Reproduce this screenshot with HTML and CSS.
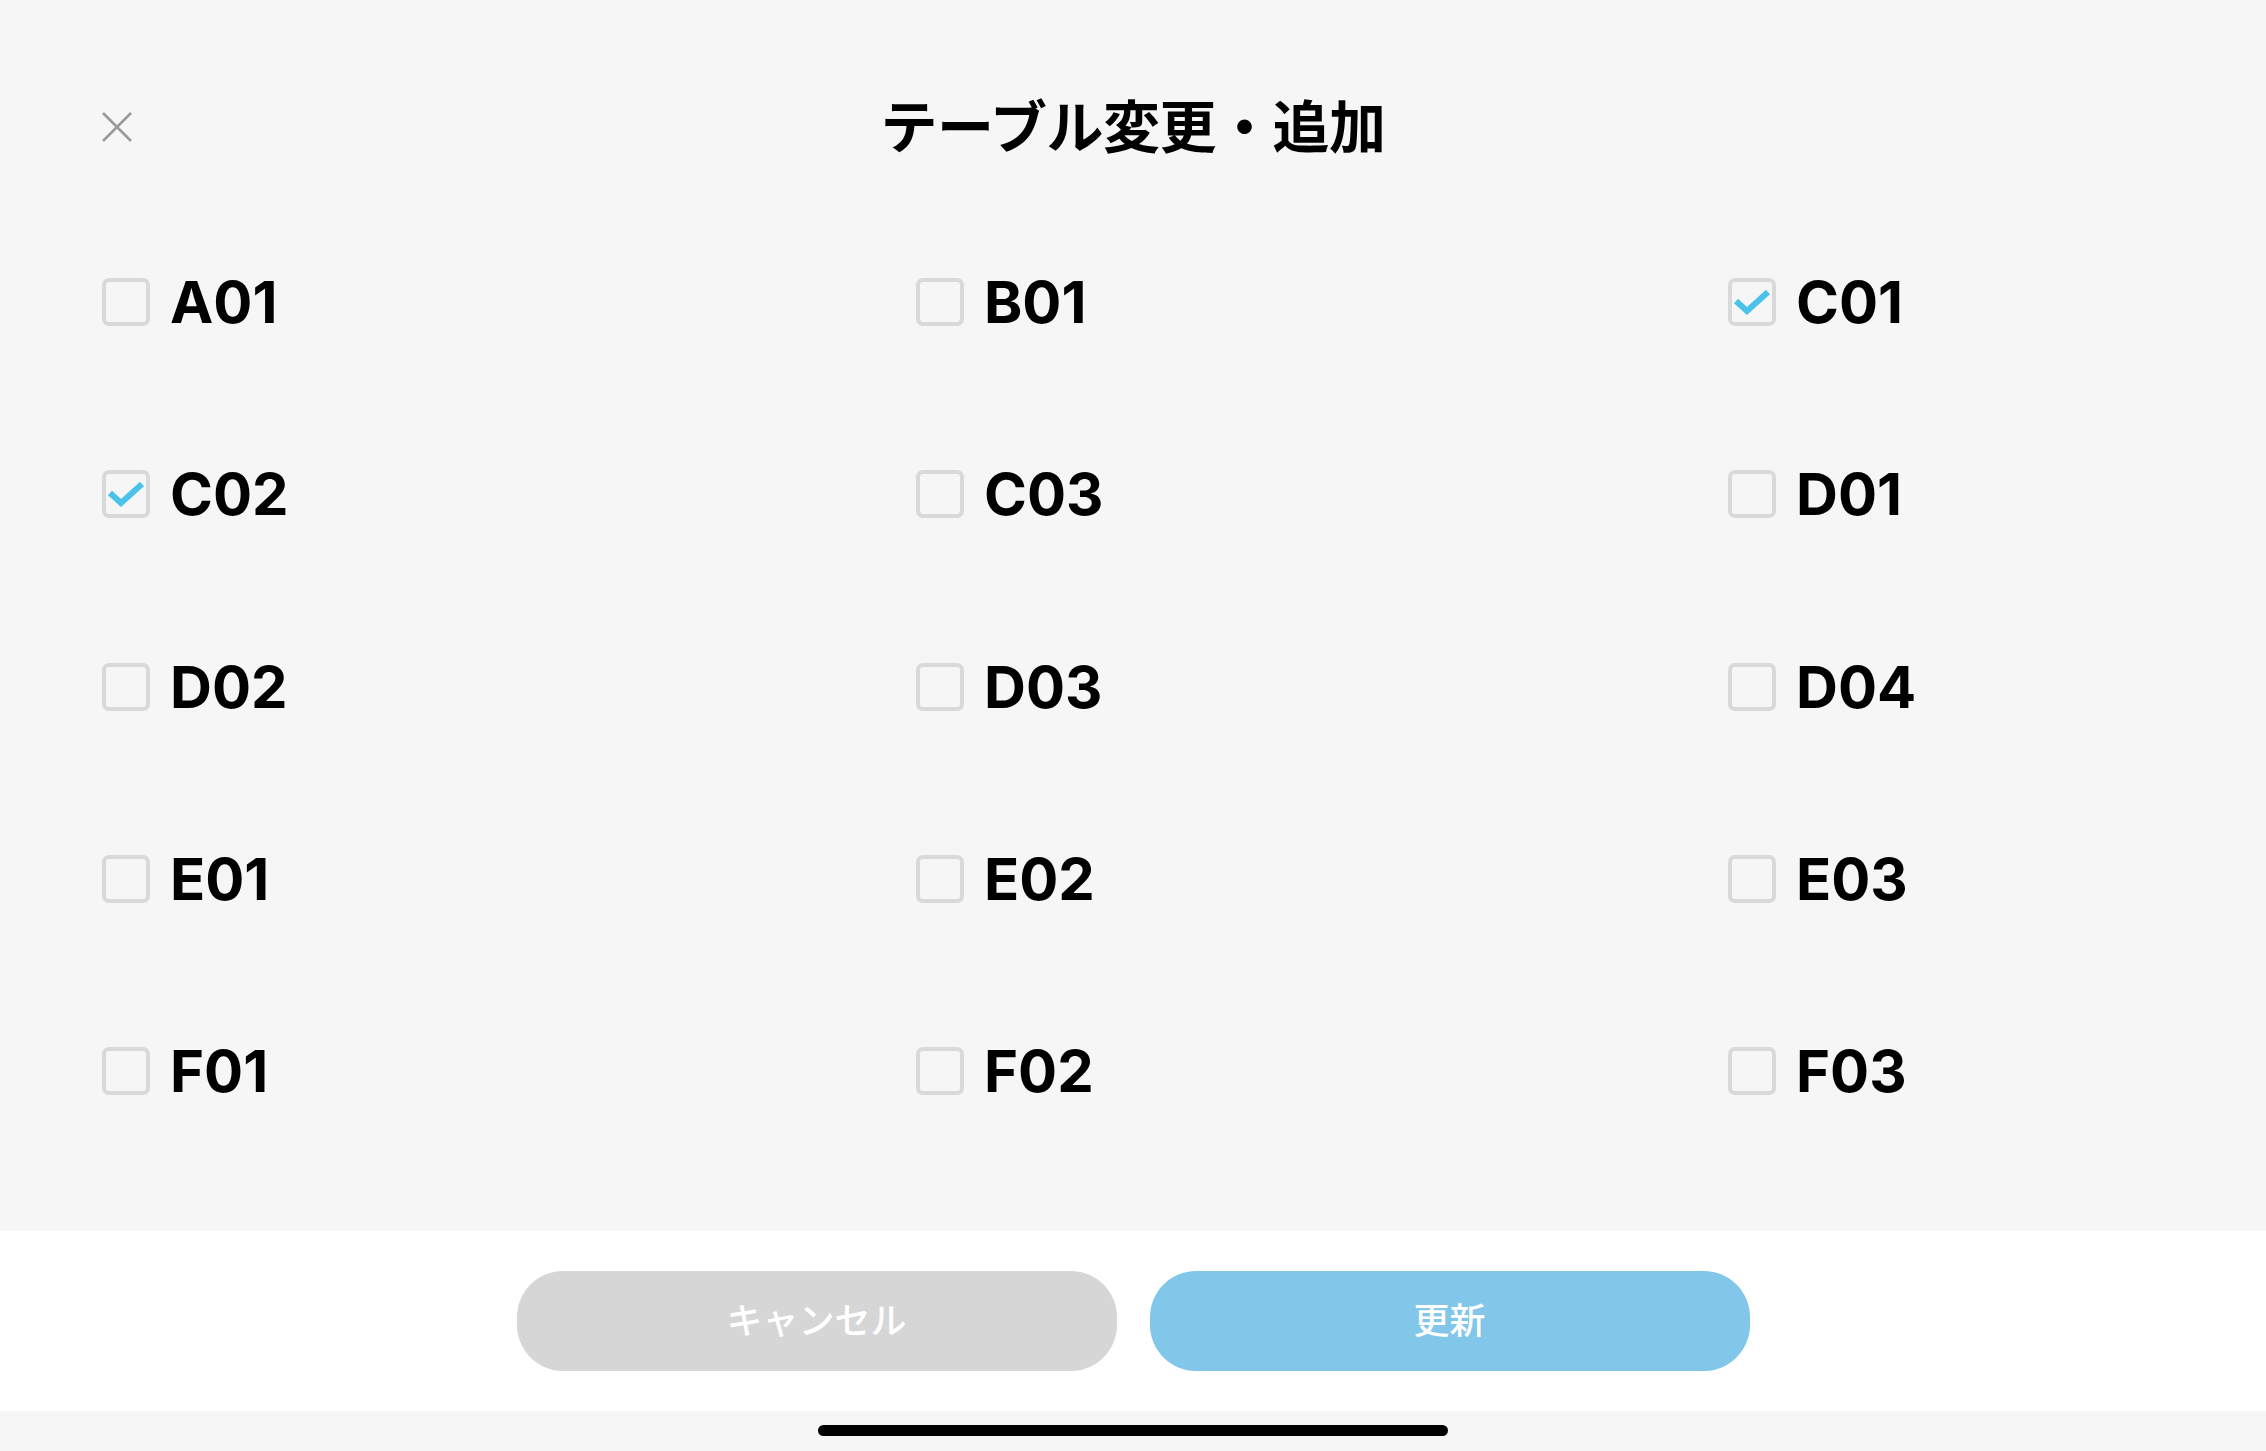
FILE: index.html
```html
<!DOCTYPE html>
<html lang="ja">
<head>
<meta charset="utf-8">
<link rel="stylesheet" href="styles.css">
</head>
<body>
<div class="screen">
  <header class="header">
    <div class="close">
      <svg width="30" height="30" viewBox="0 0 30 30"><path d="M1 1 L29 29 M29 1 L1 29" stroke="#9a9a9a" stroke-width="2.6" fill="none"/></svg>
    </div>
    <h1 class="title">テーブル変更・追加</h1>
    <div></div>
  </header>
  <main class="tables">
    <label class="item"><span class="box"></span><span class="name">A01</span></label>
    <label class="item"><span class="box"></span><span class="name">B01</span></label>
    <label class="item"><span class="box checked"><svg viewBox="0 0 48 48"><polyline points="8,23 19,33 40,14"/></svg></span><span class="name">C01</span></label>
    <label class="item"><span class="box checked"><svg viewBox="0 0 48 48"><polyline points="8,23 19,33 40,14"/></svg></span><span class="name">C02</span></label>
    <label class="item"><span class="box"></span><span class="name">C03</span></label>
    <label class="item"><span class="box"></span><span class="name">D01</span></label>
    <label class="item"><span class="box"></span><span class="name">D02</span></label>
    <label class="item"><span class="box"></span><span class="name">D03</span></label>
    <label class="item"><span class="box"></span><span class="name">D04</span></label>
    <label class="item"><span class="box"></span><span class="name">E01</span></label>
    <label class="item"><span class="box"></span><span class="name">E02</span></label>
    <label class="item"><span class="box"></span><span class="name">E03</span></label>
    <label class="item"><span class="box"></span><span class="name">F01</span></label>
    <label class="item"><span class="box"></span><span class="name">F02</span></label>
    <label class="item"><span class="box"></span><span class="name">F03</span></label>
  </main>
  <div class="spacer"></div>
  <footer class="footer">
    <button class="btn cancel">キャンセル</button>
    <button class="btn update">更新</button>
  </footer>
  <div class="home"><span class="home-bar"></span></div>
</div>
</body>
</html>
```
FILE: styles.css
```css
* { box-sizing: border-box; }
html, body { margin: 0; padding: 0; }
body {
  background: #f6f6f6;
  font-family: "Inter", "Noto Sans CJK JP", sans-serif;
  color: #000;
  overflow: hidden;
}
.screen {
  width: 2266px;
  height: 1451px;
  display: flex;
  flex-direction: column;
}
.header {
  display: grid;
  grid-template-columns: 1fr auto 1fr;
  align-items: center;
  height: 80px;
  margin-top: 87px;
}
.close {
  padding-left: 102px;
  display: flex;
  align-items: center;
}
.close svg { display: block; }
.title {
  margin: 0;
  margin-top: -8px;
  font-family: "Noto Sans CJK JP", sans-serif;
  font-weight: 700;
  font-size: 57px;
  line-height: 80px;
  letter-spacing: -0.5px;
}
.tables {
  margin-top: 39px;
  padding-left: 102px;
  display: grid;
  grid-template-columns: 814px 812px 1fr;
  grid-auto-rows: 192.25px;
}
.item {
  display: flex;
  align-items: center;
  gap: 20px;
  height: 192px;
}
.box {
  width: 48px;
  height: 48px;
  border: 4px solid #d9d9d9;
  border-radius: 7px;
  position: relative;
  flex: none;
}
.box svg {
  position: absolute;
  left: -4px;
  top: -4px;
  width: 48px;
  height: 48px;
}
.box polyline {
  fill: none;
  stroke: #4bc2ea;
  stroke-width: 6;
  stroke-linejoin: miter;
}
.name {
  font-family: "Inter", sans-serif;
  font-weight: 700;
  font-size: 58px;
  line-height: 1;
}
.spacer { flex: 1; }
.footer {
  background: #fff;
  height: 180px;
  display: flex;
  justify-content: center;
  align-items: center;
  gap: 33px;
}
.btn {
  width: 600px;
  height: 100px;
  border: none;
  border-radius: 46px;
  color: #fff;
  font-family: "Noto Sans CJK JP", sans-serif;
  font-weight: 500;
  font-size: 36px;
  padding: 0 0 6px;
}
.cancel { background: #d6d6d6; }
.update { background: #82c7ea; }
.home {
  height: 40px;
  display: flex;
  justify-content: center;
  padding-top: 14px;
}
.home-bar {
  width: 630px;
  height: 11px;
  border-radius: 6px;
  background: #000;
}
```
